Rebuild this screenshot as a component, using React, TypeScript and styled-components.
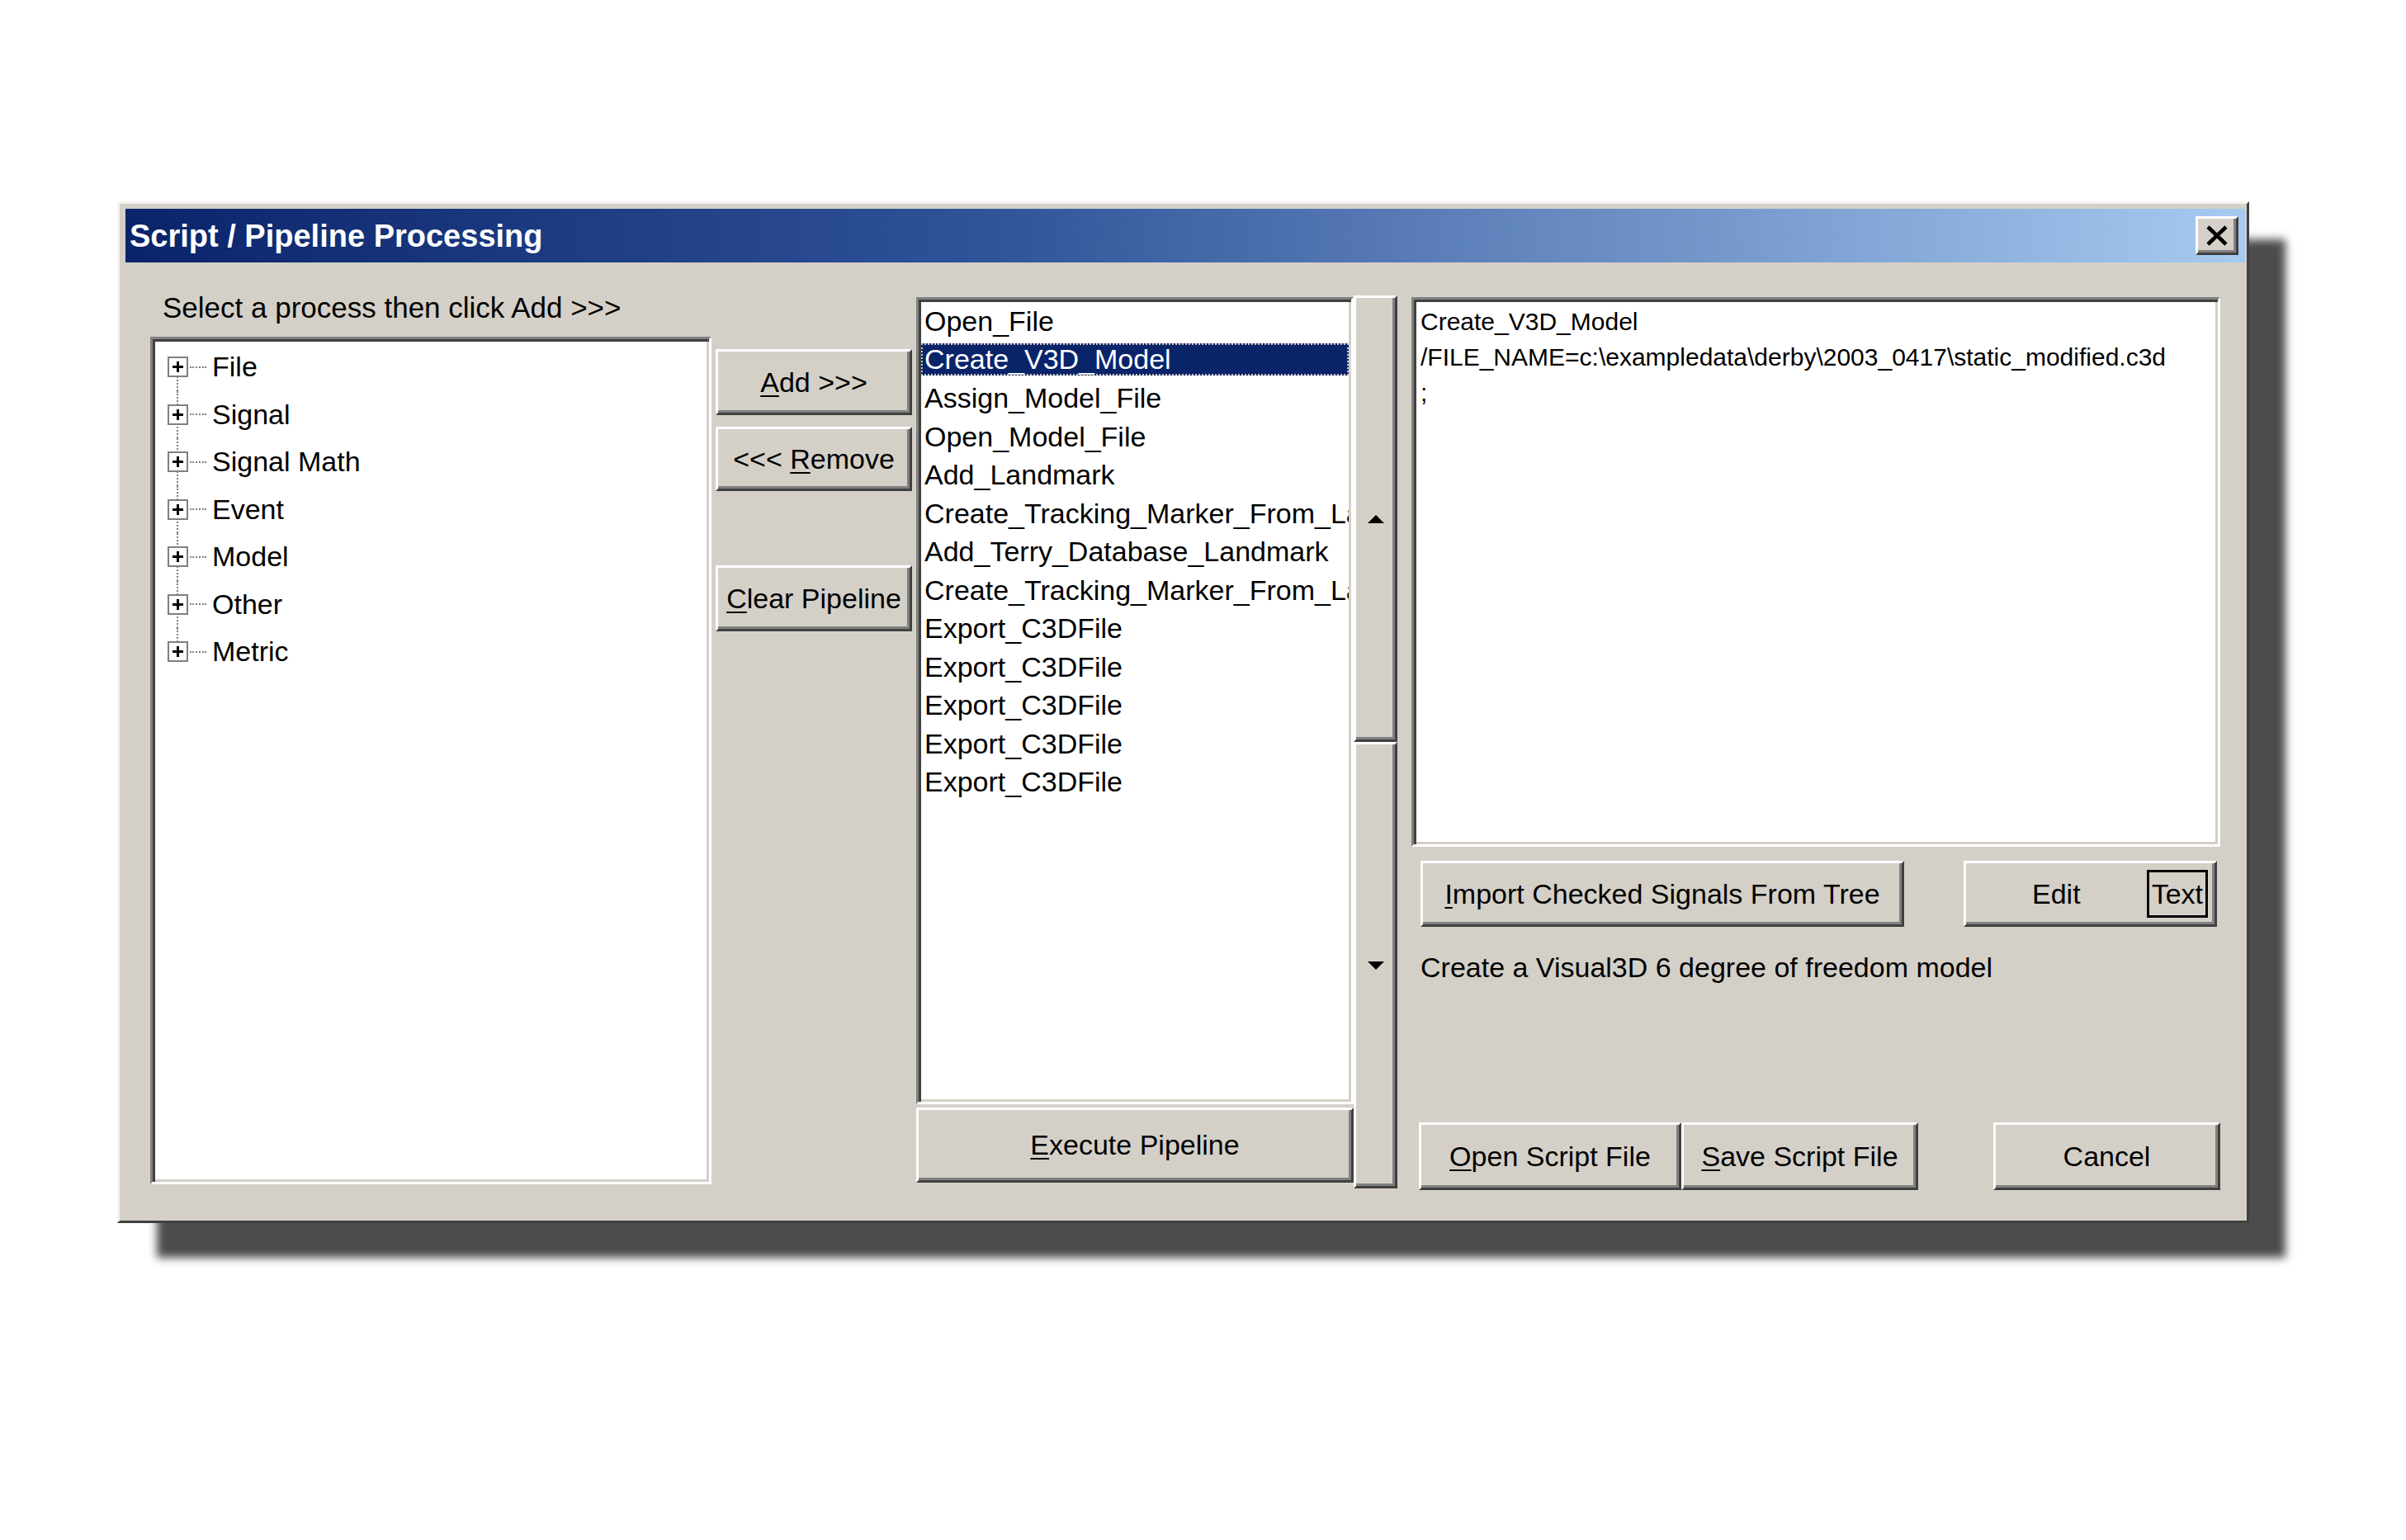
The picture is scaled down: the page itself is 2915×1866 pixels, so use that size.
import React from "react";
import styled, { createGlobalStyle, css } from "styled-components";

const FACE = "#d4d0c8";

const GlobalStyle = createGlobalStyle`
  html, body {
    margin: 0;
    padding: 0;
    background: #ffffff;
  }
  body {
    font-family: "Liberation Sans", Arial, sans-serif;
    color: #000;
  }
`;

const raised = css`
  box-sizing: border-box;
  background: ${FACE};
  border: 3px solid;
  border-color: #ffffff #404040 #404040 #ffffff;
  box-shadow: inset -3px -3px 0 #808080;
`;

const sunken = css`
  box-sizing: border-box;
  background: #ffffff;
  border: 3px solid;
  border-color: #808080 #ffffff #ffffff #808080;
  box-shadow: inset 3px 3px 0 #404040, inset -3px -3px 0 ${FACE};
`;

const Page = styled.div`
  width: 2915px;
  height: 1866px;
  box-sizing: border-box;
  padding: 244px 0 0 142px;
  overflow: hidden;
`;

const Window = styled.div`
  width: 2583px;
  height: 1238px;
  box-sizing: border-box;
  display: flex;
  flex-direction: column;
  background: ${FACE};
  border: 3px solid;
  border-color: #f4f3ef #404040 #404040 #f4f3ef;
  padding: 6px 2px 2px 7px;
  box-shadow: 46px 44px 10px -2px rgba(0, 0, 0, 0.7);
`;

const TitleBar = styled.div`
  flex: none;
  height: 65px;
  display: flex;
  align-items: center;
  justify-content: space-between;
  padding: 0 8px 0 5px;
  background: linear-gradient(90deg, #0a246a 0%, #2f5298 40%, #a6caf0 100%);
`;

const Title = styled.span`
  color: #ffffff;
  font-weight: bold;
  font-size: 38px;
  line-height: 65px;
  padding-top: 2px;
`;

const CloseButton = styled.button`
  ${raised};
  width: 52px;
  height: 47px;
  padding: 0;
  display: flex;
  align-items: center;
  justify-content: center;
`;

const Content = styled.div`
  flex: 1;
  display: flex;
  align-items: flex-start;
  padding-left: 30px;
`;

const TreeColumn = styled.div`
  width: 680px;
  display: flex;
  flex-direction: column;
`;

const Prompt = styled.div`
  height: 90px;
  box-sizing: border-box;
  padding: 35px 0 0 15px;
  font-size: 35px;
  line-height: 40px;
  white-space: nowrap;
`;

const TreeBox = styled.div`
  ${sunken};
  height: 1027px;
  padding-top: 5px;
`;

const TreeRow = styled.div<{ $first?: boolean; $last?: boolean }>`
  position: relative;
  height: 57.5px;
  display: flex;
  align-items: center;
  font-size: 34px;
  line-height: 57.5px;

  &::before {
    content: "";
    position: absolute;
    left: 29px;
    top: ${(p) => (p.$first ? "50%" : "0")};
    bottom: ${(p) => (p.$last ? "50%" : "0")};
    border-left: 2px dotted #808080;
  }
`;

const Expander = styled.span`
  position: relative;
  z-index: 1;
  width: 25px;
  height: 25px;
  box-sizing: border-box;
  margin-left: 18px;
  background: #ffffff;
  border: 2px solid #808080;

  &::before,
  &::after {
    content: "";
    position: absolute;
    background: #000;
  }
  &::before {
    left: 4px;
    right: 4px;
    top: 9px;
    height: 3px;
  }
  &::after {
    top: 4px;
    bottom: 4px;
    left: 9px;
    width: 3px;
  }
`;

const Dots = styled.span`
  width: 20px;
  margin: 0 7px 0 2px;
  border-top: 2px dotted #808080;
`;

const ButtonColumn = styled.div`
  width: 238px;
  margin-left: 5px;
  padding-top: 105px;
  display: flex;
  flex-direction: column;
`;

const Button = styled.button<{ $width?: number; $height: number; $gap?: number }>`
  ${raised};
  width: ${(p) => (p.$width ? `${p.$width}px` : "100%")};
  height: ${(p) => p.$height}px;
  margin-top: ${(p) => p.$gap ?? 0}px;
  padding: 0;
  font-family: inherit;
  font-size: 34px;
  color: #000;
  white-space: nowrap;
  display: flex;
  align-items: center;
  justify-content: center;
`;

const Key = styled.u`
  text-decoration-thickness: 2px;
  text-underline-offset: 4px;
`;

const PipelineColumn = styled.div`
  margin-left: 5px;
  padding-top: 40px;
  display: flex;
`;

const PipelineStack = styled.div`
  width: 530px;
  padding-top: 2px;
  display: flex;
  flex-direction: column;
`;

const ListBox = styled.div`
  ${sunken};
  height: 978px;
  padding-top: 3px;
  overflow: hidden;
  margin-bottom: 4px;
`;

const ListItem = styled.div<{ $selected?: boolean }>`
  height: ${(p) => (p.$selected ? "39px" : "46.5px")};
  margin: ${(p) => (p.$selected ? "3.75px 3px" : "0 3px")};
  padding-left: 4px;
  font-size: 34px;
  line-height: ${(p) => (p.$selected ? "39px" : "46.5px")};
  white-space: nowrap;
  overflow: hidden;
  color: ${(p) => (p.$selected ? "#ffffff" : "#000")};
  background: ${(p) => (p.$selected ? "#0a246a" : "transparent")};
  outline: ${(p) => (p.$selected ? "2px dotted #c8c4bc" : "none")};
  outline-offset: -2px;
`;

const ScrollBar = styled.div`
  width: 53px;
  height: 1082px;
  display: flex;
  flex-direction: column;
`;

const ScrollSegment = styled.div`
  ${raised};
  flex: 1;
  display: flex;
  align-items: center;
  justify-content: center;
`;

const RightColumn = styled.div`
  width: 980px;
  height: 1124px;
  box-sizing: border-box;
  margin-left: 17px;
  padding-top: 42px;
  display: flex;
  flex-direction: column;
`;

const ScriptBox = styled.div`
  ${sunken};
  height: 666px;
  padding: 4.5px 0 0 8px;
  font-size: 30px;
  line-height: 43px;
  white-space: nowrap;
  overflow: hidden;
`;

const ActionRow = styled.div<{ $gap: number; $height: number }>`
  display: flex;
  height: ${(p) => p.$height}px;
  margin-top: ${(p) => p.$gap}px;
`;

const BottomRow = styled.div`
  display: flex;
  height: 82px;
  margin-top: auto;
`;

const EditLabel = styled.span`
  flex: 1;
  text-align: center;
`;

const Toggle = styled.span`
  height: 58px;
  box-sizing: border-box;
  margin-right: 8px;
  padding: 0 3px;
  border: 3px solid #000;
  line-height: 52px;
`;

const Description = styled.div`
  margin-top: 29px;
  padding-left: 11px;
  font-size: 34px;
  line-height: 40px;
  white-space: nowrap;
`;

const Spacer = styled.div<{ $w: number }>`
  flex: none;
  width: ${(p) => p.$w}px;
`;

const treeItems = ["File", "Signal", "Signal Math", "Event", "Model", "Other", "Metric"];

const pipeline = [
  "Open_File",
  "Create_V3D_Model",
  "Assign_Model_File",
  "Open_Model_File",
  "Add_Landmark",
  "Create_Tracking_Marker_From_Landmark",
  "Add_Terry_Database_Landmark",
  "Create_Tracking_Marker_From_Landmark",
  "Export_C3DFile",
  "Export_C3DFile",
  "Export_C3DFile",
  "Export_C3DFile",
  "Export_C3DFile",
];

const CloseIcon = () => (
  <svg width="28" height="25" viewBox="0 0 28 25">
    <path d="M3 2 L25 23 M25 2 L3 23" stroke="#000" strokeWidth="4.5" />
  </svg>
);

const Arrow = ({ up }: { up: boolean }) => (
  <svg width="20" height="10" viewBox="0 0 20 10">
    <polygon points={up ? "10,0 20,10 0,10" : "0,0 20,0 10,10"} fill="#000" />
  </svg>
);

export default function App() {
  return (
    <>
      <GlobalStyle />
      <Page>
        <Window>
          <TitleBar>
            <Title>Script / Pipeline Processing</Title>
            <CloseButton aria-label="Close">
              <CloseIcon />
            </CloseButton>
          </TitleBar>
          <Content>
            <TreeColumn>
              <Prompt>Select a process then click Add &gt;&gt;&gt;</Prompt>
              <TreeBox>
                {treeItems.map((item, i) => (
                  <TreeRow key={item} $first={i === 0} $last={i === treeItems.length - 1}>
                    <Expander />
                    <Dots />
                    <span>{item}</span>
                  </TreeRow>
                ))}
              </TreeBox>
            </TreeColumn>

            <ButtonColumn>
              <Button $height={80}>
                <Key>A</Key>dd &gt;&gt;&gt;
              </Button>
              <Button $height={78} $gap={14}>
                &lt;&lt;&lt;&nbsp;<Key>R</Key>emove
              </Button>
              <Button $height={80} $gap={90}>
                <Key>C</Key>lear Pipeline
              </Button>
            </ButtonColumn>

            <PipelineColumn>
              <PipelineStack>
                <ListBox>
                  {pipeline.map((item, i) => (
                    <ListItem key={i} $selected={i === 1}>
                      {item}
                    </ListItem>
                  ))}
                </ListBox>
                <Button $height={91}>
                  <Key>E</Key>xecute Pipeline
                </Button>
              </PipelineStack>
              <ScrollBar>
                <ScrollSegment>
                  <Arrow up />
                </ScrollSegment>
                <ScrollSegment>
                  <Arrow up={false} />
                </ScrollSegment>
              </ScrollBar>
            </PipelineColumn>

            <RightColumn>
              <ScriptBox>
                <div>Create_V3D_Model</div>
                <div>/FILE_NAME=c:\exampledata\derby\2003_0417\static_modified.c3d</div>
                <div>;</div>
              </ScriptBox>
              <ActionRow $gap={17} $height={80}>
                <Spacer $w={11} />
                <Button $width={586} $height={80}>
                  <Key>I</Key>mport Checked Signals From Tree
                </Button>
                <Spacer $w={72} />
                <Button $width={307} $height={80}>
                  <EditLabel>Edit</EditLabel>
                  <Toggle>Text</Toggle>
                </Button>
              </ActionRow>
              <Description>Create a Visual3D 6 degree of freedom model</Description>
              <BottomRow>
                <Spacer $w={9} />
                <Button $width={318} $height={82}>
                  <Key>O</Key>pen Script File
                </Button>
                <Button $width={287} $height={82}>
                  <Key>S</Key>ave Script File
                </Button>
                <Spacer $w={91} />
                <Button $width={275} $height={82}>
                  Cancel
                </Button>
              </BottomRow>
            </RightColumn>
          </Content>
        </Window>
      </Page>
    </>
  );
}
